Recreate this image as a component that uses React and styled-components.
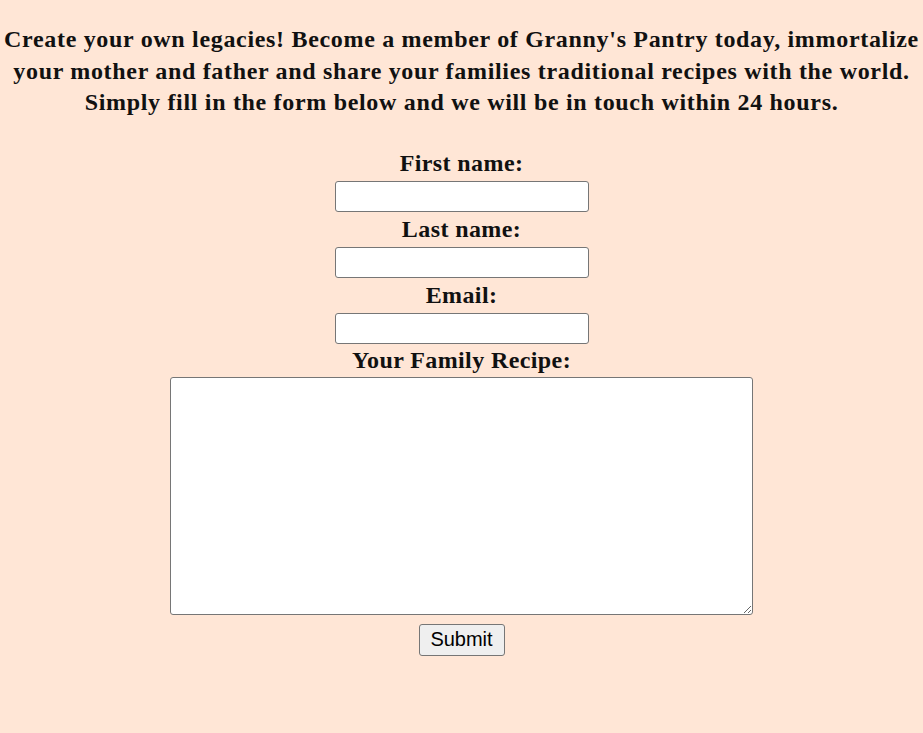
import React from "react";
import styled, { createGlobalStyle } from "styled-components";

const GlobalStyle = createGlobalStyle`
  html, body {
    margin: 0;
    padding: 0;
    background: #ffe6d6;
  }

  body {
    font-family: "Liberation Serif", "DejaVu Serif", serif;
    color: #111;
  }
`;

const Page = styled.main`
  min-height: 733px;
  background: #ffe6d6;
  display: flex;
  flex-direction: column;
  align-items: center;
  padding-top: 24px;
  box-sizing: border-box;
`;

const Intro = styled.p`
  margin: 0 0 27px;
  font-size: 24px;
  font-weight: 700;
  line-height: 31.5px;
  text-align: center;
  letter-spacing: 0.68px;
`;

const Form = styled.form`
  display: flex;
  flex-direction: column;
  align-items: center;
`;

const Label = styled.label`
  font-size: 24px;
  font-weight: 700;
  line-height: ${(p) => (p.$tight ? "33px" : "35px")};
  letter-spacing: 0.4px;
`;

const Field = styled.input`
  width: 254px;
  height: 31px;
  box-sizing: border-box;
  border: 1px solid #767676;
  border-radius: 3px;
  background: #fff;
  margin: 0;
`;

const Recipe = styled.textarea`
  width: 583px;
  height: 238px;
  box-sizing: border-box;
  border: 1px solid #767676;
  border-radius: 3px;
  background: #fff;
  margin: 0;
`;

const SubmitButton = styled.button`
  margin-top: 9px;
  width: 86px;
  height: 32px;
  font-family: "Liberation Sans", Arial, sans-serif;
  font-size: 20px;
  color: #000;
  background: #efefef;
  border: 1px solid #767676;
  border-radius: 3px;
  padding: 0;
`;

export default function App() {
  return (
    <>
      <GlobalStyle />
      <Page>
        <Intro>
          Create your own legacies! Become a member of Granny's Pantry today, immortalize
          <br />
          your mother and father and share your families traditional recipes with the world.
          <br />
          Simply fill in the form below and we will be in touch within 24 hours.
        </Intro>
        <Form onSubmit={(e) => e.preventDefault()}>
          <Label htmlFor="fname">First name:</Label>
          <Field id="fname" type="text" />
          <Label htmlFor="lname">Last name:</Label>
          <Field id="lname" type="text" />
          <Label htmlFor="email">Email:</Label>
          <Field id="email" type="email" />
          <Label htmlFor="recipe" $tight>
            Your Family Recipe:
          </Label>
          <Recipe id="recipe" />
          <SubmitButton type="submit">Submit</SubmitButton>
        </Form>
      </Page>
    </>
  );
}
